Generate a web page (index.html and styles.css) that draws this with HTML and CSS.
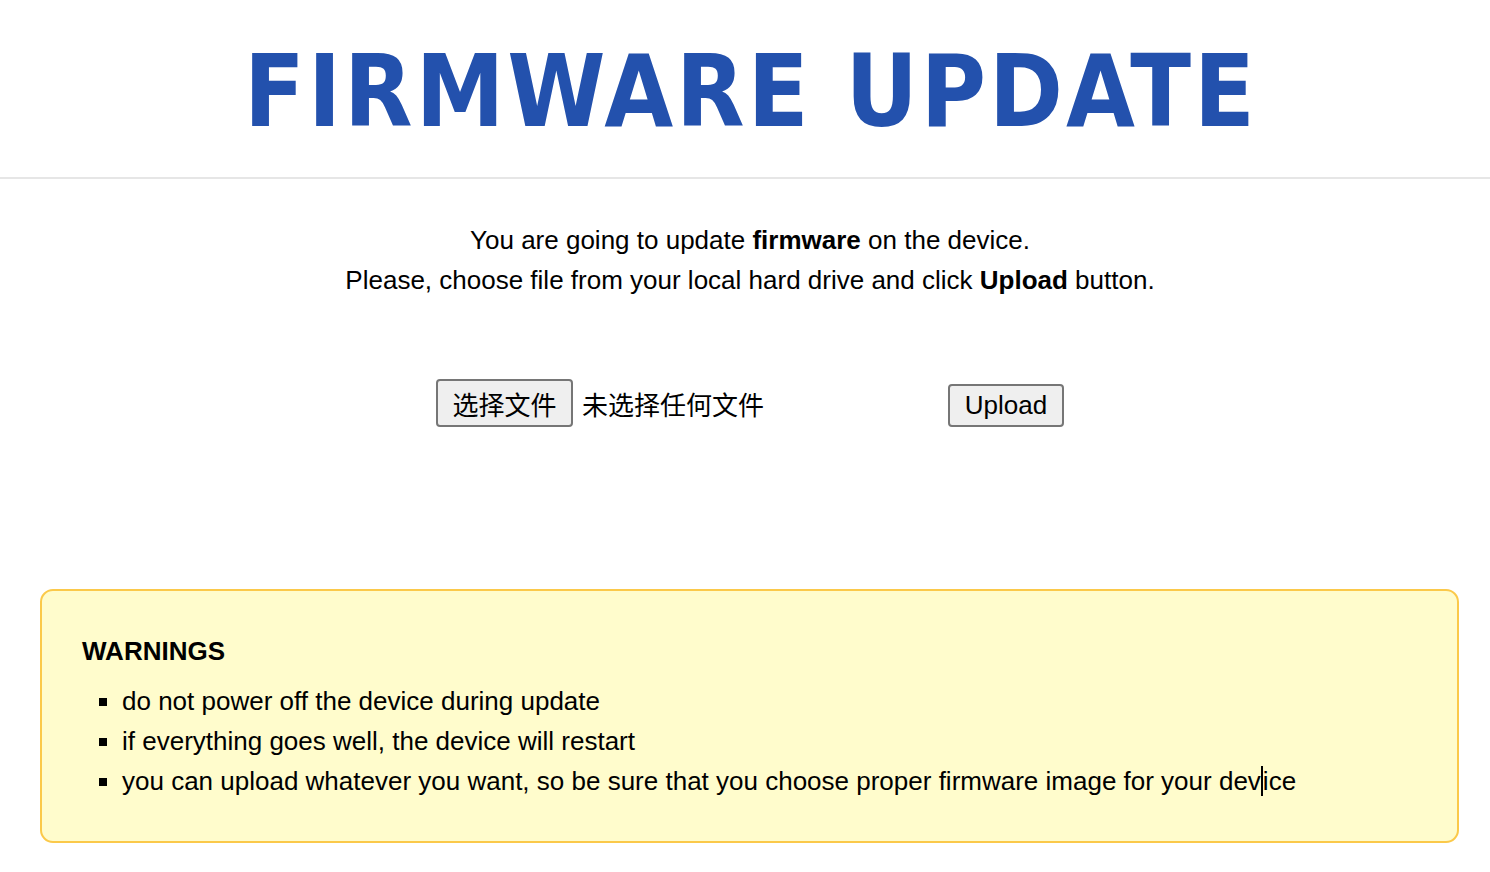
FILE: index.html
```html
<!DOCTYPE html>
<html>
<head>
<meta charset="utf-8">
<link rel="stylesheet" href="styles.css">
</head>
<body>
<header class="header">
  <h1 class="title">FIRMWARE UPDATE</h1>
</header>
<main class="main">
  <p class="intro">You are going to update <b>firmware</b> on the device.<br>Please, choose file from your local hard drive and click <b>Upload</b> button.</p>
  <form class="form">
    <div class="file">
      <span class="btn choose">选择文件</span>
      <span class="nofile">未选择任何文件</span>
    </div>
    <span class="btn upload">Upload</span>
  </form>
  <section class="warn">
    <h2 class="warn-title">WARNINGS</h2>
    <ul class="warn-list">
      <li>do not power off the device during update</li>
      <li>if everything goes well, the device will restart</li>
      <li>you can upload whatever you want, so be sure that you choose proper firmware image for your dev<span class="caret"></span>ice</li>
    </ul>
  </section>
</main>
</body>
</html>
```
FILE: styles.css
```css
html, body { margin: 0; padding: 0; background: #fff; }
body { font-family: "Liberation Sans", Arial, "Noto Sans CJK SC", sans-serif; color: #000; }
.header { border-bottom: 2px solid #e6e6e6; height: 177px; display: flex; align-items: center; justify-content: center; }
.title { margin: 6px 0 0 12px; font-family: "DejaVu Sans Condensed", "DejaVu Sans", Verdana, sans-serif; font-stretch: condensed; font-weight: bold; font-size: 99px; color: #2351ad; letter-spacing: 3px; line-height: 1; }
.main { padding: 0 30px 0 40px; }
.intro { text-align: center; font-size: 26px; line-height: 40px; margin: 41px 0 0; }
.form { display: flex; justify-content: center; align-items: center; margin-top: 75px; height: 56px; gap: 0; }
.file { display: flex; align-items: center; width: 512px; }
.btn { font-family: "Liberation Sans", Arial, "Noto Sans CJK SC", sans-serif; display: inline-flex; align-items: center; justify-content: center; background: #efefef; border: 2px solid #767676; border-radius: 4px; box-sizing: border-box; }
.choose { width: 137px; height: 48px; font-size: 26px; font-family: "Noto Sans CJK SC", sans-serif; }
.nofile { font-family: "Noto Sans CJK SC", sans-serif; font-size: 26px; margin-left: 9px; }
.upload { width: 116px; height: 43px; font-size: 26px; margin-top: 4px; }
.warn { margin-top: 158px; width: 1419px; box-sizing: border-box; background: #fffccc; border: 2px solid #fbc94a; border-radius: 13px; padding: 44px 40px 40px; }
.warn-title { margin: 0; font-size: 26px; font-weight: bold; line-height: 32px; }
.warn-list { list-style: square; margin: 14px 0 0; padding-left: 40px; font-size: 26px; line-height: 40px; }
.caret { display: inline-block; width: 2px; height: 30px; background: #000; vertical-align: -6px; }
```
